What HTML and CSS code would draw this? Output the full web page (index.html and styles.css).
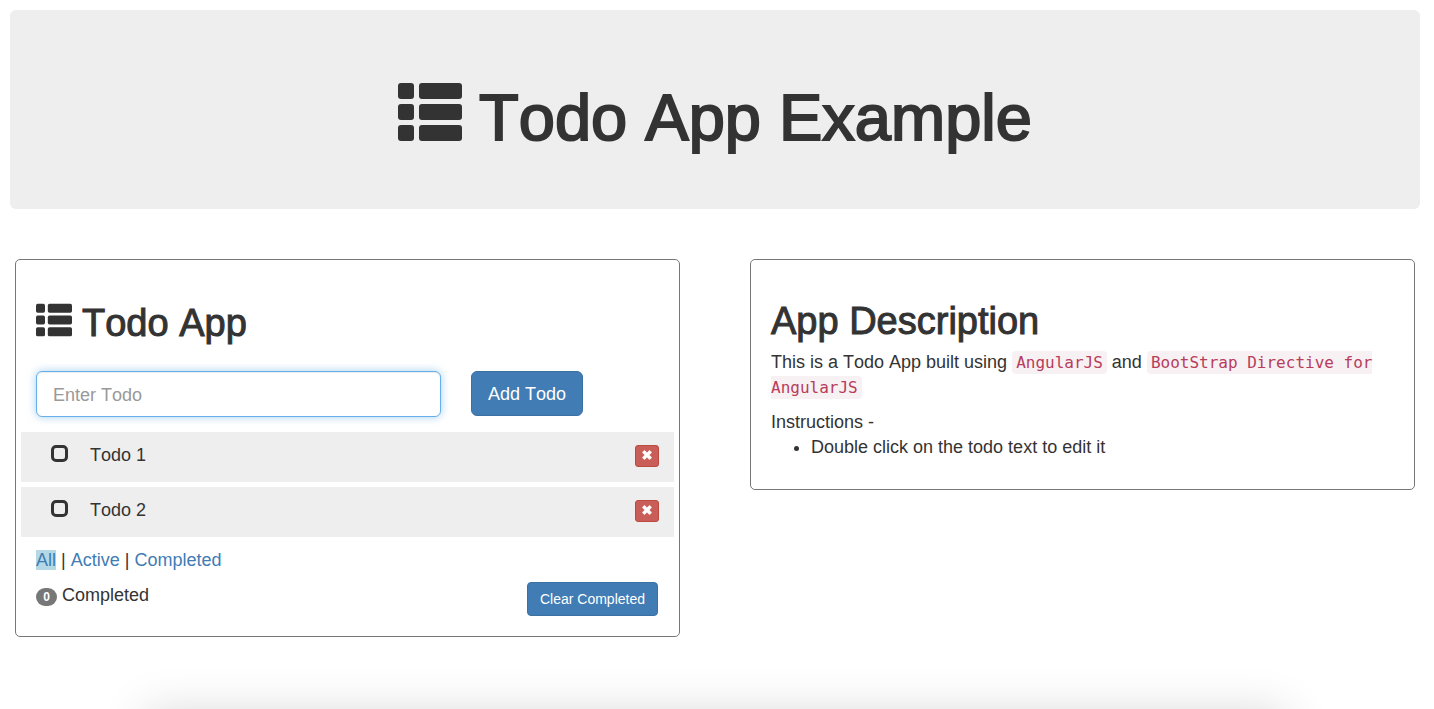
FILE: index.html
```html
<!DOCTYPE html>
<html lang="en">
<head>
<meta charset="utf-8">
<title>Todo App Example</title>
<link rel="stylesheet" href="styles.css">
</head>
<body>
<svg class="sprite" aria-hidden="true">
  <symbol id="th-list" viewBox="0 0 64 58">
    <rect width="16" height="16" rx="3"/><rect x="21" width="43" height="16" rx="3"/>
    <rect y="21" width="16" height="16" rx="3"/><rect x="21" y="21" width="43" height="16" rx="3"/>
    <rect y="42" width="16" height="16" rx="3"/><rect x="21" y="42" width="43" height="16" rx="3"/>
  </symbol>
  <symbol id="remove" viewBox="0 0 10 10">
    <path d="M2.4.3 5 2.8 7.6.3 9.7 2.4 7.2 5 9.7 7.6 7.6 9.7 5 7.2 2.4 9.7.3 7.6 2.8 5 .3 2.4Z" stroke-width=".5" stroke="#fff" stroke-linejoin="round"/>
  </symbol>
</svg>
<header class="jumbotron">
  <h1 class="page-title"><svg class="page-icon" aria-hidden="true"><use href="#th-list"/></svg>Todo App Example</h1>
</header>
<main class="columns">
  <section class="panel">
    <h2 class="heading heading-icon"><svg class="list-icon" aria-hidden="true"><use href="#th-list"/></svg>Todo App</h2>
    <form class="add-form">
      <input class="todo-input" type="text" placeholder="Enter Todo" aria-label="Enter Todo">
      <button class="btn btn-large" type="button">Add Todo</button>
    </form>
    <ul class="todos">
      <li class="todo">
        <input class="check" type="checkbox" id="todo-1">
        <label class="todo-text" for="todo-1">Todo 1</label>
        <button class="delete" type="button" aria-label="Delete Todo 1"><svg class="delete-icon" aria-hidden="true"><use href="#remove"/></svg></button>
      </li>
      <li class="todo">
        <input class="check" type="checkbox" id="todo-2">
        <label class="todo-text" for="todo-2">Todo 2</label>
        <button class="delete" type="button" aria-label="Delete Todo 2"><svg class="delete-icon" aria-hidden="true"><use href="#remove"/></svg></button>
      </li>
    </ul>
    <nav class="filters"><a class="link selected" href="#all">All</a> | <a class="link" href="#active">Active</a> | <a class="link" href="#completed">Completed</a></nav>
    <div class="summary">
      <div class="count"><span class="badge">0</span>Completed</div>
      <button class="btn btn-small" type="button">Clear Completed</button>
    </div>
  </section>
  <section class="panel">
    <h2 class="heading">App Description</h2>
    <p class="about">This is a Todo App built using <code class="code">AngularJS</code> and <code class="code">BootStrap Directive for AngularJS</code></p>
    <p class="intro">Instructions -</p>
    <ul class="steps"><li>Double click on the todo text to edit it</li></ul>
  </section>
</main>
</body>
</html>
```
FILE: styles.css
```css
* { box-sizing: border-box; }
body {
  margin: 0;
  padding: 10px 14px 0 10px;
  font: 18px/25px "Liberation Sans", Arial, sans-serif;
  font-kerning: none;
  color: #333;
  background: #fff;
}
/* soft shadow rising from below the window edge */
body::after {
  content: "";
  position: fixed;
  top: calc(100% + 4px);
  left: 145px;
  right: 148px;
  height: 200px;
  box-shadow: 0 0 44px rgba(0, 0, 0, .16);
}
.sprite { display: none; }
h1, h2, p, ul { margin: 0; padding: 0; }
.jumbotron {
  padding: 72px 20px 55px;
  border-radius: 6px;
  background: #eee;
}
.page-title {
  display: flex;
  justify-content: center;
  gap: 17px;
  font-size: 65px;
  line-height: 72px;
  font-weight: 400;
  -webkit-text-stroke: 2px #333;
}
.page-icon { width: 64px; height: 60px; fill: #333; }
.columns {
  display: grid;
  grid-template-columns: 1fr 1fr;
  align-items: start;
  gap: 70px;
  padding: 50px 5px;
}
.panel {
  padding: 40px 20px 20px;
  border: 1px solid #777;
  border-radius: 5px;
}
.heading {
  font-size: 38px;
  line-height: 42px;
  font-weight: 400;
  -webkit-text-stroke: 1px #333;
}
.heading-icon { display: flex; gap: 10px; align-items: center; padding-top: 2px; }
.list-icon { width: 36px; height: 40px; padding-bottom: 6px; fill: #333; }
.add-form { display: flex; align-items: flex-start; gap: 30px; margin-top: 27px; }
.todo-input {
  flex: 0 1 65%;
  min-width: 0;
  height: 46px;
  padding: 11px 16px 9px;
  border: 1px solid #66afe9;
  border-radius: 6px;
  font: inherit;
  outline: 0;
  box-shadow: inset 0 1px 1px rgba(0, 0, 0, .08), 0 0 8px rgba(102, 175, 233, .6);
}
.todo-input::placeholder { color: #999; }
.btn {
  border: 1px solid #3b70a3;
  background: #417cb4;
  color: #fff;
  font-family: inherit;
  font-kerning: inherit;
}
.btn-large { height: 45px; padding: 2px 16px 0; border-radius: 6px; font-size: 18px; }
.btn-small { height: 34px; padding: 0 12px; border-radius: 4px; font-size: 14px; }
.todos { display: grid; gap: 5px; margin: 15px -15px 0; list-style: none; }
.todo { display: flex; align-items: flex-start; height: 50px; padding: 13px 15px 0 30px; background: #eee; }
.check {
  appearance: none;
  width: 17px;
  height: 17px;
  margin: 0;
  border: 3px solid #333;
  border-radius: 5px;
}
.todo-text { flex: 1; margin-left: 22px; line-height: 20px; }
.delete {
  display: flex;
  align-items: flex-start;
  justify-content: center;
  width: 24px;
  height: 22px;
  padding: 4px 0;
  border: 1px solid #be4941;
  border-radius: 3px;
  background: #c85e57;
}
.delete-icon { width: 10px; height: 10px; fill: #fff; }
.filters { margin-top: 11px; }
.link { color: #417cb4; text-decoration: none; }
.selected { background: #b4d8e4; }
.summary { display: flex; justify-content: space-between; margin-top: 9px; padding-right: 1px; }
.count { display: flex; align-items: center; height: 27px; gap: 5px; }
.badge {
  min-width: 21px;
  height: 18px;
  margin-top: 3px;
  border-radius: 10px;
  background: #777;
  color: #fff;
  font-size: 12px;
  font-weight: 700;
  line-height: 18px;
  text-align: center;
}
.about { margin-top: 8px; }
.code {
  padding: 2px 4px;
  border-radius: 4px;
  background: #f7f1f3;
  color: #b83c5b;
  font: 16px "DejaVu Sans Mono", monospace;
}
.intro { margin-top: 10px; }
.steps { padding: 0 0 9px 40px; }
```
